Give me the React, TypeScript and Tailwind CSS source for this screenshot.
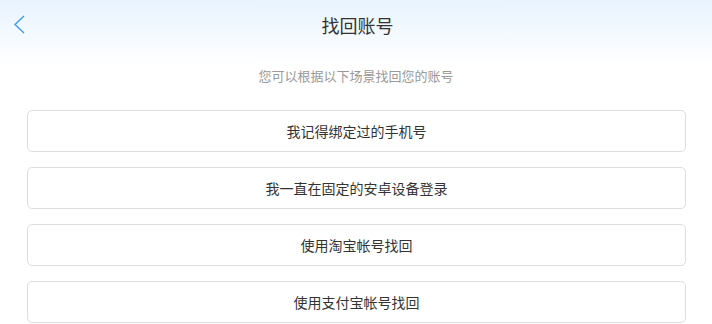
import React from "react";

const options = [
  "我记得绑定过的手机号",
  "我一直在固定的安卓设备登录",
  "使用淘宝帐号找回",
  "使用支付宝帐号找回",
];

export default function App() {
  return (
    <div
      className="w-[712px] h-[324px] overflow-hidden bg-white"
      style={{ fontFamily: '"Noto Sans CJK SC", "Noto Sans", sans-serif' }}
    >
      <div className="bg-gradient-to-b from-[#e8f3fe] to-white h-[66px]">
        <div className="relative h-[50px] flex items-center justify-center">
          <button className="absolute left-[13px] top-[15px]">
            <svg width="12" height="19" viewBox="0 0 12 19" fill="none">
              <path d="M11 1L2 9.5L11 18" stroke="#3f9bf4" strokeWidth="1.4" />
            </svg>
          </button>
          <h1 className="text-[18px] text-[#333] leading-none pl-[3px]">找回账号</h1>
        </div>
      </div>
      <p className="text-center text-[13px] text-[#999] leading-none mt-[3px]">
        您可以根据以下场景找回您的账号
      </p>
      <div className="flex flex-col gap-[15px] pl-[27px] pr-[26px] mt-[28px]">
        {options.map((o) => (
          <button
            key={o}
            className="h-[42px] w-full border border-[#dedede] rounded-[5px] bg-white text-[14px] text-[#333]"
          >
            {o}
          </button>
        ))}
      </div>
    </div>
  );
}
